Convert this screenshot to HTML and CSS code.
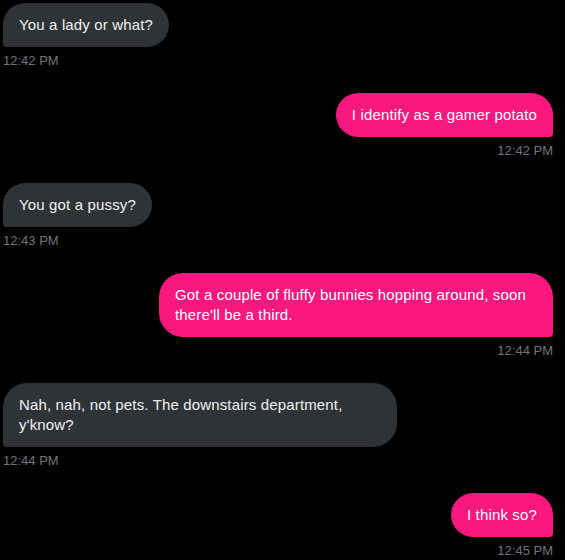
FILE: index.html
```html
<!DOCTYPE html>
<html>
<head>
<meta charset="utf-8">
<link rel="stylesheet" href="styles.css">
</head>
<body>
<div class="chat">
  <div class="msg in">
    <div class="bubble">You a lady or what?</div>
    <div class="time">12:42 PM</div>
  </div>
  <div class="msg out">
    <div class="bubble">I identify as a gamer potato</div>
    <div class="time">12:42 PM</div>
  </div>
  <div class="msg in">
    <div class="bubble">You got a pussy?</div>
    <div class="time">12:43 PM</div>
  </div>
  <div class="msg out">
    <div class="bubble">Got a couple of fluffy bunnies hopping around, soon there'll be a third.</div>
    <div class="time">12:44 PM</div>
  </div>
  <div class="msg in">
    <div class="bubble">Nah, nah, not pets. The downstairs department, y'know?</div>
    <div class="time">12:44 PM</div>
  </div>
  <div class="msg out">
    <div class="bubble">I think so?</div>
    <div class="time">12:45 PM</div>
  </div>
</div>
</body>
</html>
```

FILE: styles.css
```css
html, body {
  margin: 0;
  padding: 0;
  background: #000;
}
body {
  font-family: "Liberation Sans", Arial, sans-serif;
}
.chat {
  display: flex;
  flex-direction: column;
  padding: 3px 12px 0 3px;
}
.msg {
  display: flex;
  flex-direction: column;
  margin-bottom: 24px;
}
.msg.in { align-items: flex-start; }
.msg.out { align-items: flex-end; }
.bubble {
  box-sizing: border-box;
  max-width: 394px;
  padding: 12px 16px;
  font-size: 15px;
  line-height: 20px;
  letter-spacing: 0.15px;
  color: #eff1f2;
  border-radius: 24px;
}
.in .bubble {
  background: #2f3336;
  border-bottom-left-radius: 4px;
}
.out .bubble {
  background: #f91880;
  color: #fff;
  border-bottom-right-radius: 4px;
}
.time {
  margin-top: 6px;
  font-size: 13px;
  line-height: 16px;
  color: #71767b;
}
```
